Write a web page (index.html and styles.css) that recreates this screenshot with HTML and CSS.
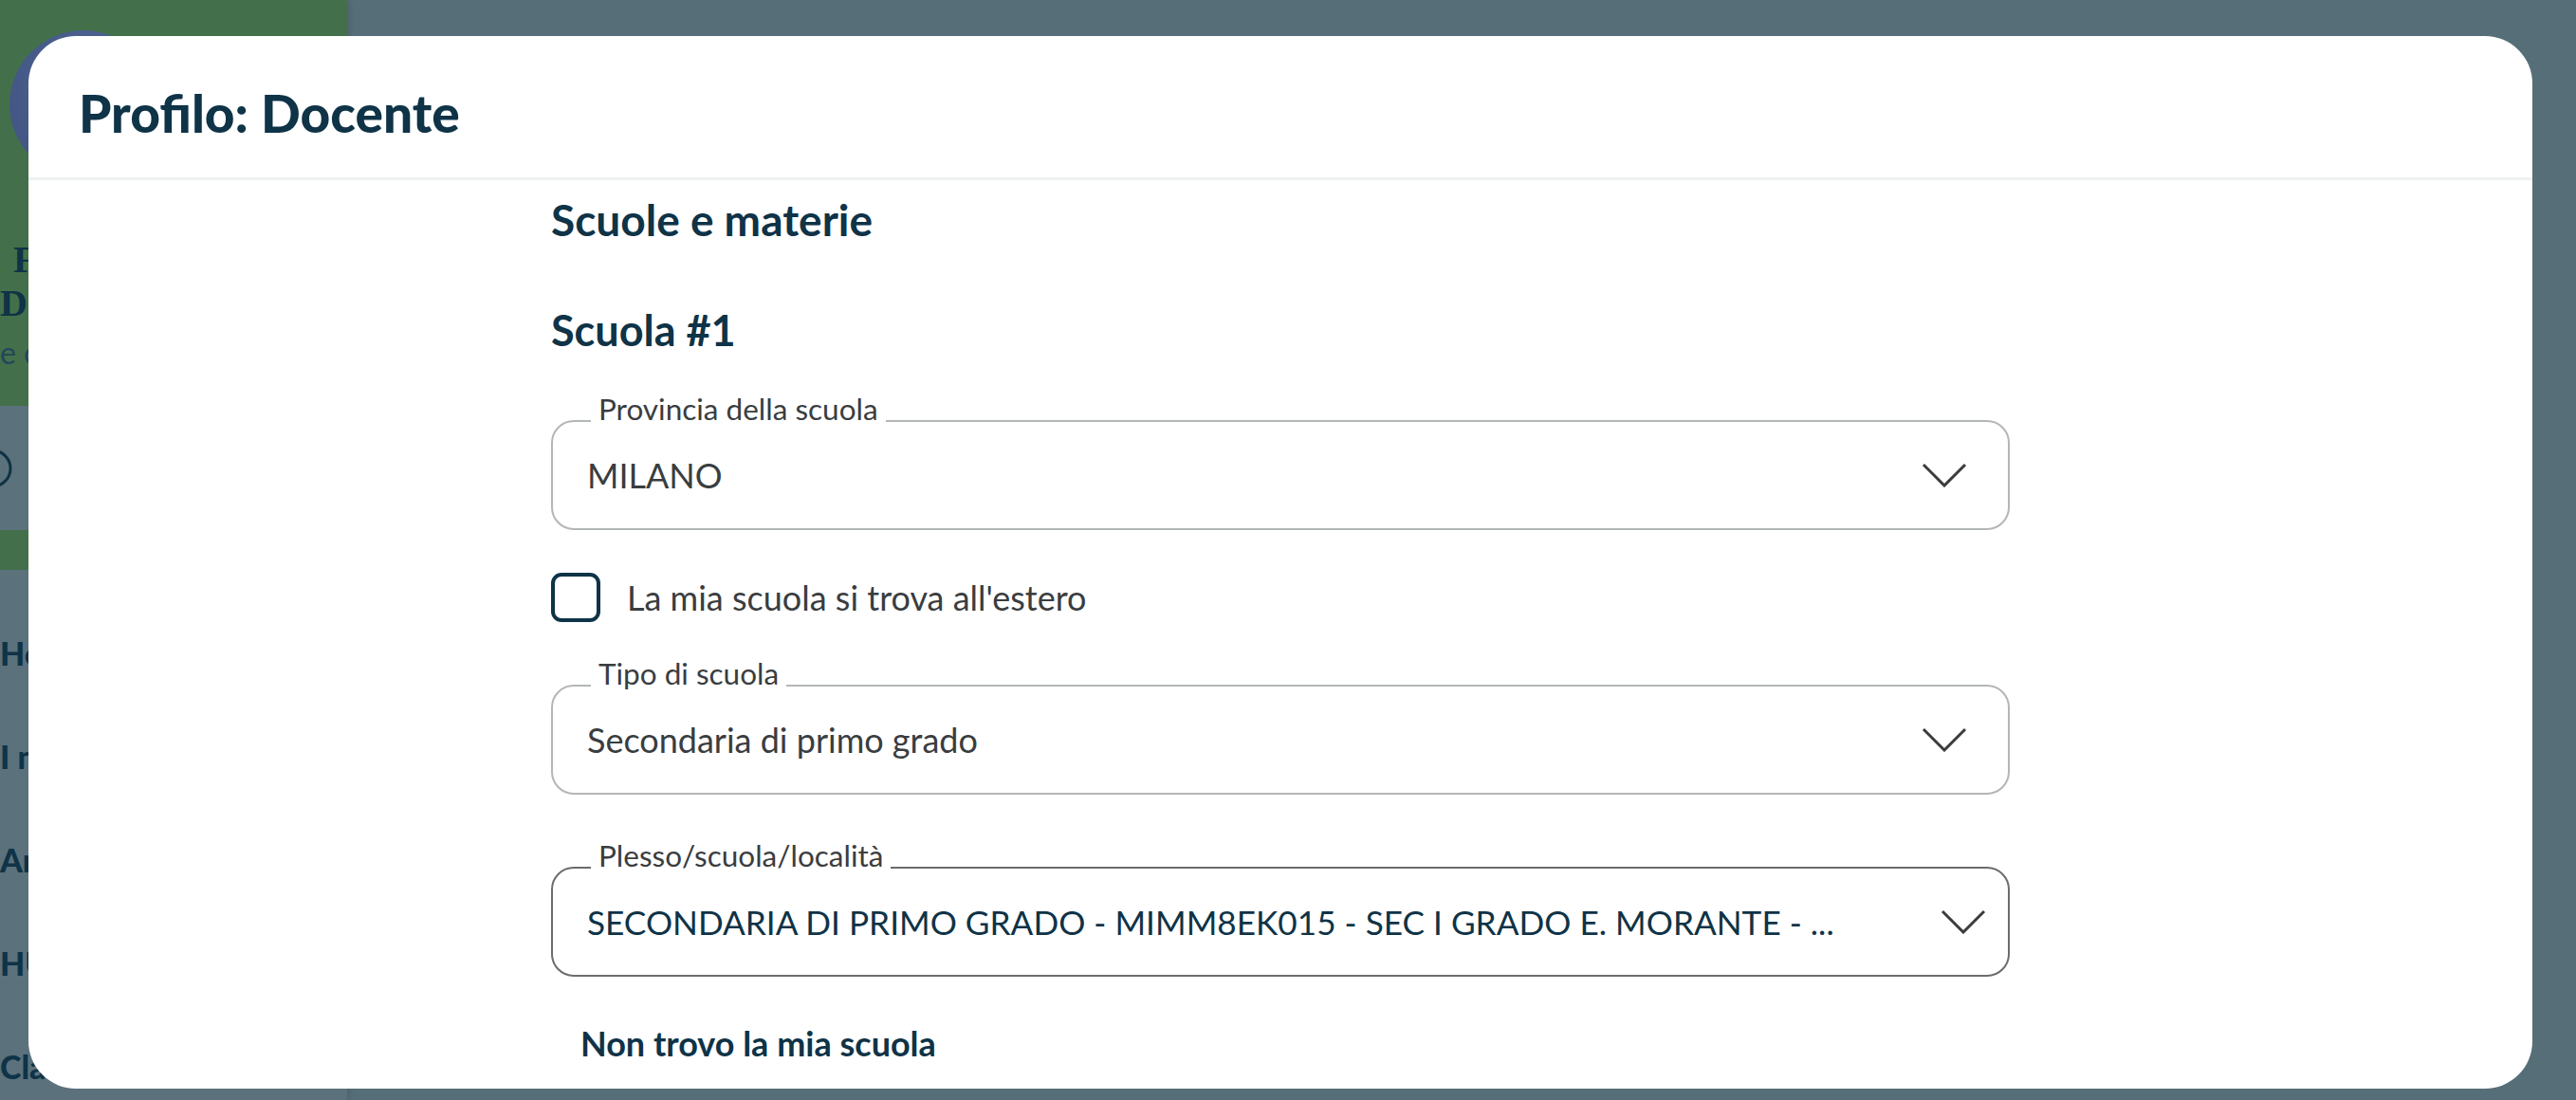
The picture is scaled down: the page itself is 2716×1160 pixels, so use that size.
FILE: index.html
```html
<!DOCTYPE html>
<html lang="it">
<head>
    <meta charset="UTF-8">
    <meta name="viewport" content="width=device-width, initial-scale=1.0">
    <title>Profilo: Docente</title>
    <link rel="stylesheet" href="styles.css">
</head>
<body>
    <div class="page">
        <aside class="sidebar">
            <div class="profile">
                <div class="avatar"></div>
                <div class="profile-name">F</div>
                <div class="profile-role">Docente</div>
                <div class="profile-mail">e classi</div>
            </div>
            <div class="account-row">
                <svg class="account-icon" viewBox="0 0 44 44"><circle cx="22" cy="22" r="19" fill="none" stroke="#0e3345" stroke-width="3"/></svg>
            </div>
            <div class="active-band"></div>
            <nav class="nav">
                <a href="#">Home</a>
                <a href="#">I miei corsi</a>
                <a href="#">Archivio</a>
                <a href="#">HUB</a>
                <a href="#">Classi</a>
            </nav>
        </aside>
        <main class="main"></main>
    </div>

    <div class="modal">
        <div class="modal-header">
            <h1 class="modal-title">Profilo: Docente</h1>
        </div>
        <div class="modal-body">
            <div class="form">
                <h2 class="section-title">Scuole e materie</h2>
                <h3 class="school-title">Scuola #1</h3>

                <div class="field">
                    <span class="field-label">Provincia della scuola</span>
                    <span class="field-value">MILANO</span>
                    <svg class="chevron" viewBox="0 0 48 26"><polyline points="2,2 24,24 46,2" fill="none" stroke="#3a3b3c" stroke-width="3"/></svg>
                </div>

                <label class="check-row">
                    <span class="checkbox"></span>
                    <span class="check-label">La mia scuola si trova all'estero</span>
                </label>

                <div class="field field-type">
                    <span class="field-label">Tipo di scuola</span>
                    <span class="field-value">Secondaria di primo grado</span>
                    <svg class="chevron" viewBox="0 0 48 26"><polyline points="2,2 24,24 46,2" fill="none" stroke="#3a3b3c" stroke-width="3"/></svg>
                </div>

                <div class="field field-school">
                    <span class="field-label">Plesso/scuola/località</span>
                    <span class="field-value">SECONDARIA DI PRIMO GRADO - MIMM8EK015 - SEC I GRADO E. MORANTE - ...</span>
                    <svg class="chevron" viewBox="0 0 48 26"><polyline points="2,2 24,24 46,2" fill="none" stroke="#3a3b3c" stroke-width="3"/></svg>
                </div>

                <button class="link-button" type="button">Non trovo la mia scuola</button>
            </div>
        </div>
    </div>
</body>
</html>
```

FILE: styles.css
```css
:root {
    --navy: #0f3347;
    --overlay: #566e78;
    --side-gray: #5b717c;
    --side-green: #43704a;
}
body {
    margin: 0;
    width: 2716px;
    height: 1160px;
    overflow: hidden;
    font-family: Lato, "Noto Sans", sans-serif;
    background: var(--overlay);
}
.page {
    display: flex;
    height: 1160px;
}
.sidebar {
    width: 366px;
    background: var(--side-gray);
    box-shadow: 2px 0 6px rgba(0, 0, 0, 0.12);
    overflow: hidden;
}
.main {
    flex: 1;
}
.profile {
    height: 428px;
    box-sizing: border-box;
    padding-top: 32px;
    background: var(--side-green);
    color: var(--navy);
}
.avatar {
    width: 156px;
    height: 156px;
    margin-left: 10px;
    border-radius: 50%;
    background: radial-gradient(circle at 60% 40%, #5a6f9e 0%, #465a88 60%, #3d5180 100%);
}
.profile-name {
    margin-top: 64px;
    padding-left: 14px;
    font-family: "Liberation Serif", serif;
    font-weight: bold;
    font-size: 40px;
    line-height: 44px;
}
.profile-role {
    margin-top: 2px;
    font-family: "Liberation Serif", serif;
    font-weight: bold;
    font-size: 40px;
    line-height: 44px;
}
.profile-mail {
    margin-top: 12px;
    font-size: 32px;
    line-height: 36px;
    color: #23465a;
}
.account-row {
    height: 131px;
    display: flex;
    align-items: center;
}
.account-icon {
    width: 44px;
    height: 44px;
    margin-left: -30px;
}
.active-band {
    height: 42px;
    background: var(--side-green);
}
.nav {
    display: flex;
    flex-direction: column;
    padding-top: 33px;
}
.nav a {
    height: 109px;
    display: flex;
    align-items: center;
    font-weight: 900;
    font-size: 34px;
    color: var(--navy);
    text-decoration: none;
}

/* modal */
.modal {
    position: absolute;
    left: 30px;
    top: 38px;
    width: 2640px;
    height: 1110px;
    background: #ffffff;
    border-radius: 50px;
    overflow: hidden;
    color: var(--navy);
}
.modal-header {
    height: 137px;
    display: flex;
    align-items: center;
    padding: 12px 0 0 53px;
    border-bottom: 3px solid #eff2f2;
}
.modal-title {
    margin: 0;
    font-size: 55px;
    font-weight: 900;
    line-height: 62px;
}
.modal-body {
    display: flex;
    justify-content: center;
    padding-top: 15px;
}
.form {
    width: 1538px;
    display: flex;
    flex-direction: column;
    align-items: flex-start;
}
.section-title,
.school-title {
    margin: 0;
    font-size: 46px;
    font-weight: bold;
    line-height: 54px;
}
.school-title {
    font-size: 45px;
    margin-top: 62px;
    margin-bottom: 68px;
}
.field {
    position: relative;
    width: 100%;
    height: 116px;
    box-sizing: border-box;
    display: flex;
    align-items: center;
    gap: 20px;
    padding: 0 43px 0 36px;
    border: 2px solid #b3b6b7;
    border-radius: 24px;
}
.field-label {
    position: absolute;
    top: -29px;
    left: 40px;
    padding: 0 8px;
    background: #ffffff;
    font-size: 31.5px;
    line-height: 31px;
    color: #3a3d3f;
}
.field-value {
    flex: 1;
    font-size: 36px;
    line-height: 42px;
    color: #3a3d3f;
    white-space: nowrap;
    overflow: hidden;
}
.chevron {
    width: 48px;
    height: 26px;
    flex-shrink: 0;
}
.check-row {
    display: flex;
    align-items: center;
    gap: 28px;
    margin: 45px 0 66px;
}
.checkbox {
    width: 52px;
    height: 52px;
    box-sizing: border-box;
    border: 4px solid var(--navy);
    border-radius: 11px;
}
.check-label {
    font-size: 36px;
    color: #3a3d3f;
}
.field-school {
    margin-top: 76px;
    padding-right: 23px;
    border-color: #6b6c6d;
}
.field-school .field-value {
    font-size: 35.2px;
    color: var(--navy);
}
.link-button {
    margin-top: 50px;
    margin-left: 31px;
    padding: 0;
    border: none;
    background: none;
    font-family: inherit;
    font-size: 36px;
    line-height: 40px;
    font-weight: bold;
    color: var(--navy);
}
```
